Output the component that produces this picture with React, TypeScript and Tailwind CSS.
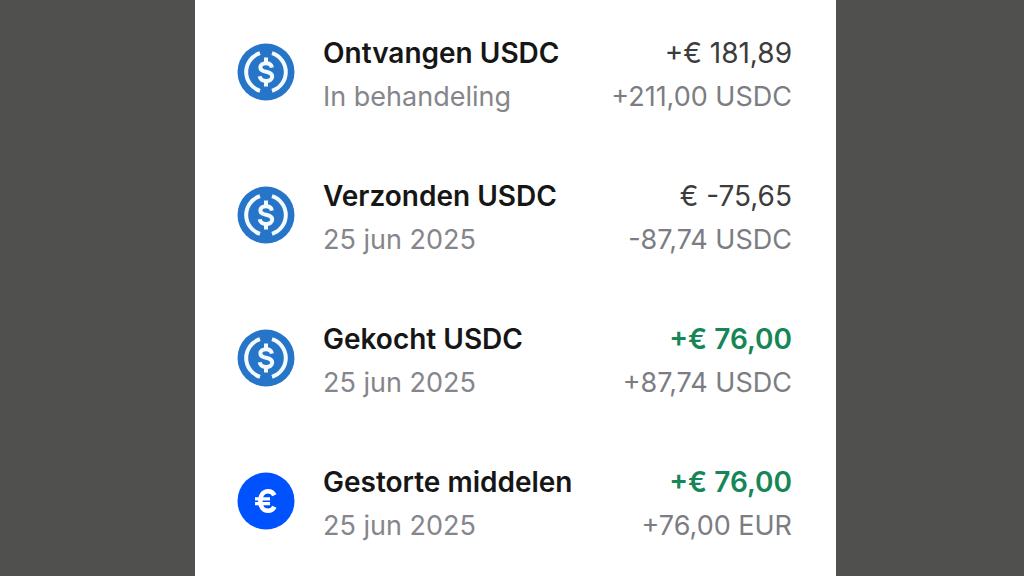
import clsx from "clsx";

type Transaction = {
  icon: "usdc" | "euro";
  title: string;
  subtitle: string;
  amount: string;
  crypto: string;
  positive?: boolean;
};

const transactions: Transaction[] = [
  { icon: "usdc", title: "Ontvangen USDC", subtitle: "In behandeling", amount: "+€ 181,89", crypto: "+211,00 USDC" },
  { icon: "usdc", title: "Verzonden USDC", subtitle: "25 jun 2025", amount: "€ -75,65", crypto: "-87,74 USDC" },
  { icon: "usdc", title: "Gekocht USDC", subtitle: "25 jun 2025", amount: "+€ 76,00", crypto: "+87,74 USDC", positive: true },
  { icon: "euro", title: "Gestorte middelen", subtitle: "25 jun 2025", amount: "+€ 76,00", crypto: "+76,00 EUR", positive: true },
];

function UsdcIcon() {
  return (
    <svg viewBox="0 0 58 58" className="mt-[11px] size-[58px] shrink-0" fill="none" aria-hidden="true">
      <circle cx="29" cy="29" r="28.5" fill="#2775c9" />
      <g stroke="#f4fbff" strokeWidth="4">
        <path d="M23 10.2A19.7 19.7 0 0 0 23 47.8" />
        <path d="M35 10.2A19.7 19.7 0 0 1 35 47.8" />
        <path d="M29 14.5v5.5M29 38v5.5" />
        <path d="M34.9 24.6c-.5-2.9-2.7-4.3-5.9-4.3-3.4 0-5.6 1.7-5.6 4.2 0 2.6 1.9 3.6 5.7 4.3 4.1.8 6.1 1.9 6.1 4.8 0 2.7-2.5 4.4-6.1 4.4-3.5 0-5.9-1.6-6.4-4.7" />
      </g>
    </svg>
  );
}

function EuroIcon() {
  return (
    <svg viewBox="0 0 58 58" className="mt-[11px] size-[58px] shrink-0" fill="none" aria-hidden="true">
      <circle cx="29" cy="29" r="28.5" fill="#0052ff" />
      <g stroke="#fff">
        <path strokeWidth="4.6" d="M37.4 23.2c-1.3-2.6-3.4-4-6.3-4-4.8 0-7.8 3.9-7.8 9.8s3 9.8 7.8 9.8c2.9 0 5-1.4 6.3-4" />
        <path strokeWidth="3.2" d="M18 26.8h15M18 31.6h15" />
      </g>
    </svg>
  );
}

function TransactionRow({ icon, title, subtitle, amount, crypto, positive }: Transaction) {
  return (
    <li className="flex items-start gap-7">
      {icon === "usdc" ? <UsdcIcon /> : <EuroIcon />}
      <div className="flex grow flex-col">
        <span className="text-[28px] leading-[43px] font-semibold text-[#161616]">{title}</span>
        <span className="text-[27px] leading-[43px] text-[#85868b]">{subtitle}</span>
      </div>
      <div className="flex flex-col text-right">
        <span className={clsx("text-[28px] leading-[43px]", positive ? "font-semibold text-[#168657]" : "text-[#3c3c3c]")}>
          {amount}
        </span>
        <span className="text-[27px] leading-[43px] text-[#7c7d82]">{crypto}</span>
      </div>
    </li>
  );
}

export default function App() {
  return (
    <div className="grid min-h-screen grid-cols-[195fr_641fr_188fr] bg-[#50504e]">
      <main className="col-start-2 bg-white pt-8 pr-11 pl-[42px]">
        <ul className="flex flex-col gap-[57px] font-['Inter',sans-serif] whitespace-nowrap">
          {transactions.map((item, index) => (
            <TransactionRow key={index} {...item} />
          ))}
        </ul>
      </main>
    </div>
  );
}
